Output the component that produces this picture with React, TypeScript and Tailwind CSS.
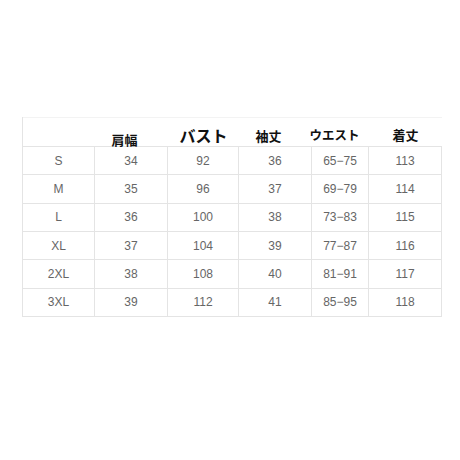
const widths = ["w-[72px]", "w-[73px]", "w-[71px]", "w-[73px]", "w-[57px]", "w-[73px]"];

const headers = [
  { label: "", cls: "" },
  { label: "肩幅", cls: "text-[13px] pr-[14px] pt-[15px]" },
  { label: "バスト", cls: "text-[16px] pt-[9px]" },
  { label: "袖丈", cls: "text-[13px] pr-[14px] pt-[11px]" },
  { label: "ウエスト", cls: "text-[12.5px] pr-[12px] pt-[11px]" },
  { label: "着丈", cls: "text-[13px] pt-[10px]" },
];

const rows = [
  ["S", "34", "92", "36", "65−75", "113"],
  ["M", "35", "96", "37", "69−79", "114"],
  ["L", "36", "100", "38", "73−83", "115"],
  ["XL", "37", "104", "39", "77−87", "116"],
  ["2XL", "38", "108", "40", "81−91", "117"],
  ["3XL", "39", "112", "41", "85−95", "118"],
];

export default function App() {
  return (
    <div className="w-[460px] h-[460px] bg-white pt-[117px] pl-[22px]">
      <div className="w-[420px] border-l border-[#e4e4e4]">
        <div className="flex h-[30px] border-t border-[#f3f3f3] border-b border-b-[#e4e4e4]">
          {headers.map((h, i) => (
            <div
              key={i}
              className={`${widths[i]} flex justify-center whitespace-nowrap leading-none font-bold text-[#111] font-['Noto_Sans_CJK_JP','Noto_Sans',sans-serif] ${h.cls}`}
            >
              {h.label}
            </div>
          ))}
        </div>
        {rows.map((r, ri) => (
          <div key={ri} className="flex h-[28.33px] border-b border-[#e4e4e4]">
            {r.map((c, ci) => (
              <div
                key={ci}
                className={`${widths[ci]} flex items-center justify-center border-r border-[#e4e4e4] text-[12px] text-[#666] font-['Liberation_Sans',Arial,sans-serif]`}
              >
                {c}
              </div>
            ))}
          </div>
        ))}
      </div>
    </div>
  );
}
